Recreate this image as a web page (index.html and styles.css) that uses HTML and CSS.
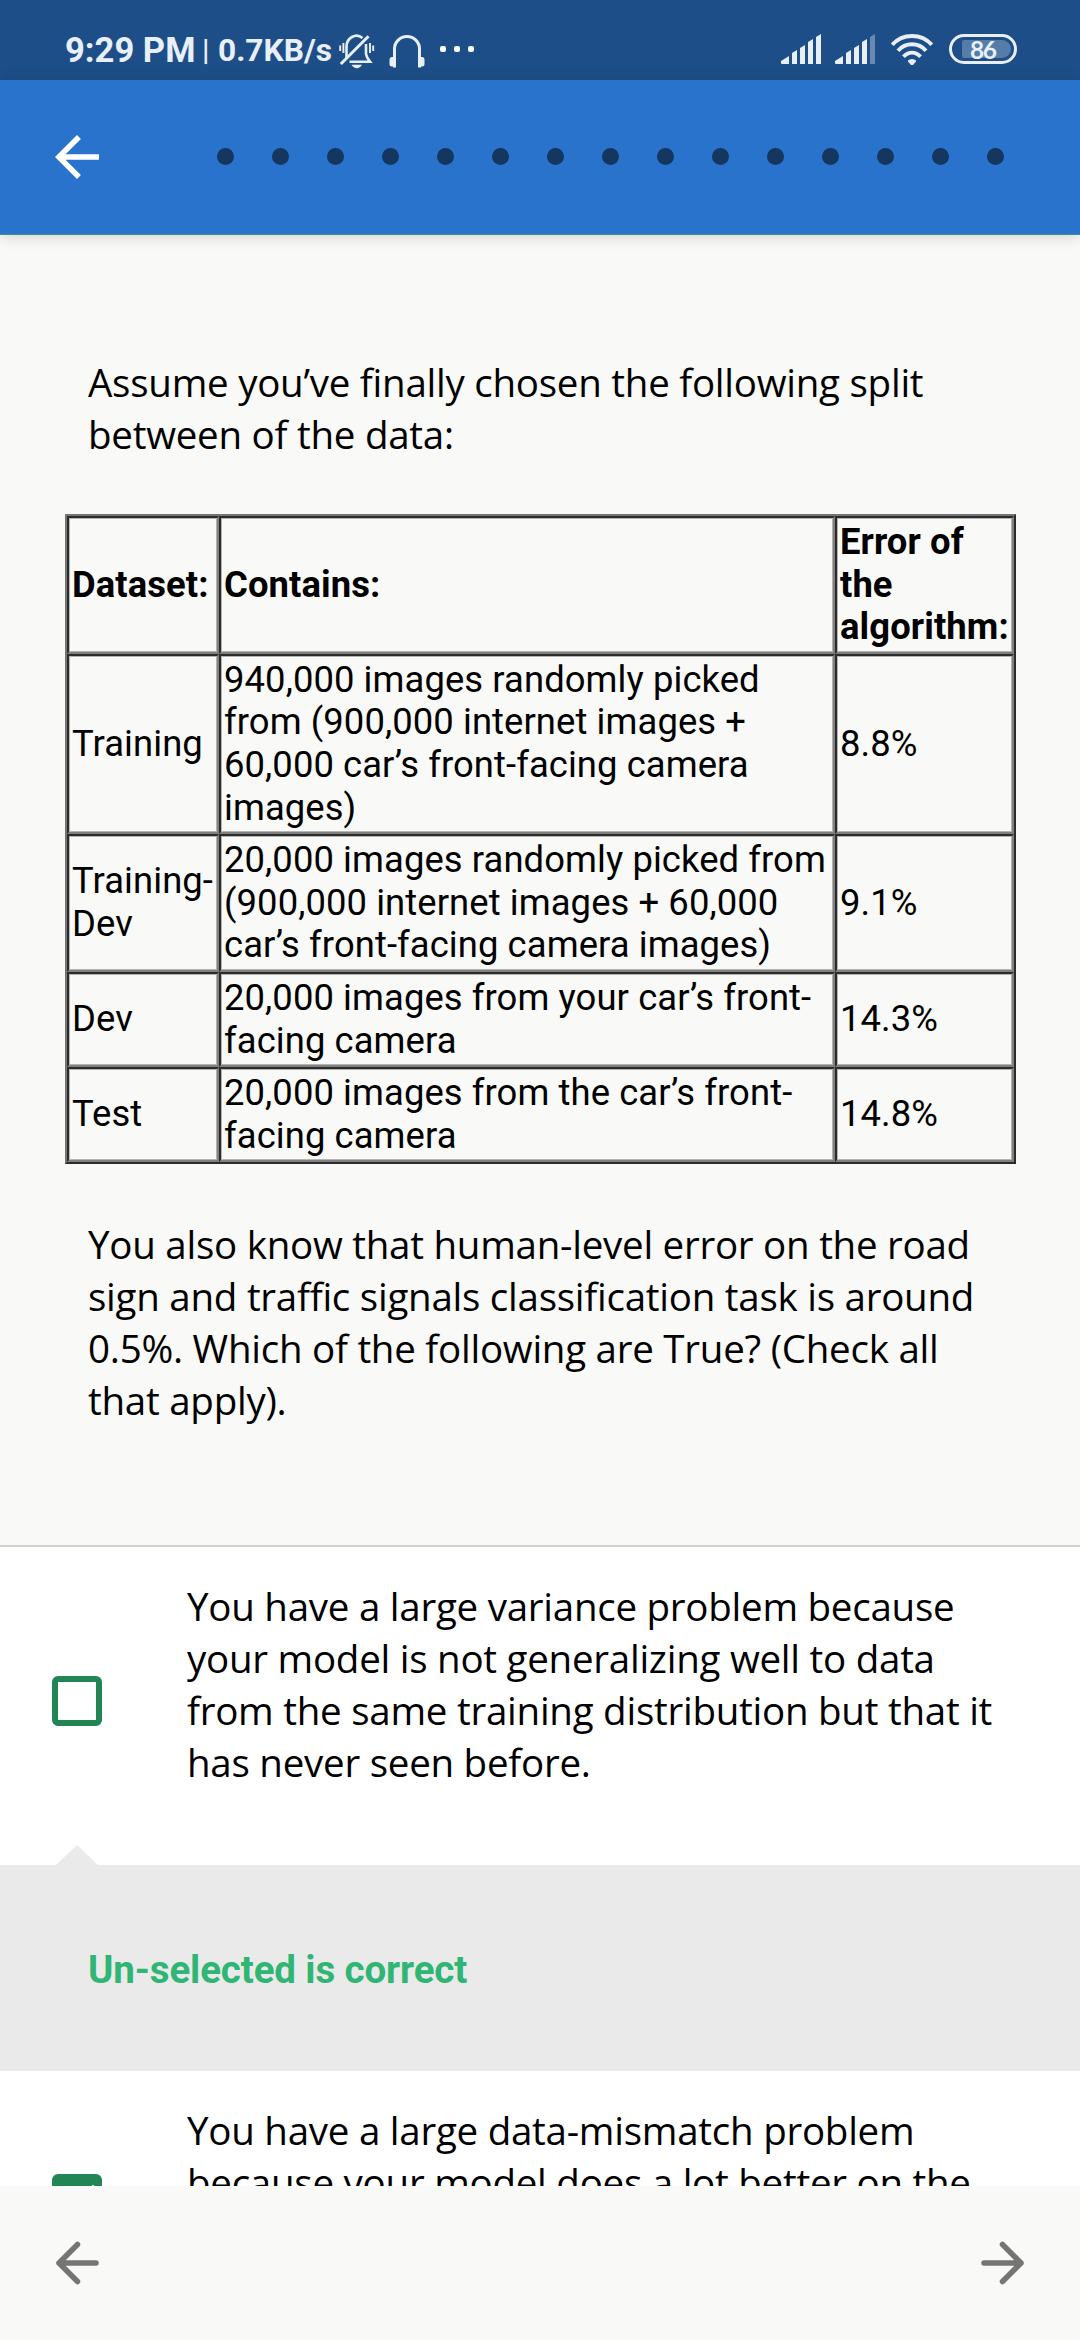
FILE: index.html
```html
<!DOCTYPE html>
<html lang="en">
<head>
<meta charset="utf-8">
<title>Quiz</title>
<link rel="stylesheet" href="styles.css">
</head>
<body>
<div class="screen">
  <header class="status">
    <span class="clock">9:29 PM</span><span class="sep">|</span><span class="speed">0.7KB/s</span>
    <svg class="ico-bell" width="36" height="36" viewBox="0 0 36 36" fill="none" stroke="#e8eff8" stroke-width="2.6">
      <path d="M7.500 24V13A10 11 0 0 1 23.500 4M27 10V20Q27.500 23.500 31 27.700H10.500"/>
      <path d="M1.800 30L29.500 2.300" stroke-width="3"/>
      <path d="M1.200 11.500v5.500M4.400 9v10M31 9v10M34.200 11.500v5.500" stroke-width="1.900"/>
      <path d="M12.500 30.800h10.500q-2 3.400-5.200 3.400t-5.300-3.400z" fill="#e8eff8" stroke="none"/>
    </svg>
    <svg class="ico-phones" width="36" height="36" viewBox="0 0 36 36" fill="none" stroke="#e8eff8" stroke-width="3">
      <path d="M5.500 33.500V15a12.500 12.500 0 0 1 25 0v18.500"/>
      <path d="M6 23v9.500H3Q.5 32.500 .5 30v-4Q.5 23 3 23zM30 23v9.500h3q2.500 0 2.500-2.500v-4q0-3-2.500-3z" fill="#e8eff8" stroke="none"/>
    </svg>
    <span class="more"><i></i><i></i><i></i></span>
    <span class="spacer"></span>
    <svg class="ico-signal" width="41" height="31" viewBox="0 0 41 31" fill="#e8eff8">
      <path d="M0 27l8-5v8H1q-1 0-1-1zM11 19l5-3v14h-5zM19 14l5-3v19h-5zM27 8l5-3v25h-5zM35 3l5-3v30h-5z"/>
    </svg>
    <svg class="ico-signal2" width="41" height="31" viewBox="0 0 41 31" fill="#e8eff8">
      <path d="M0 27l8-5v8H1q-1 0-1-1zM11 19l5-3v14h-5zM19 14l5-3v19h-5zM27 8l5-3v25h-5z"/>
      <path d="M35 3l5-3v30h-5z" fill="#6a89b1"/>
    </svg>
    <svg class="ico-wifi" width="42" height="32" viewBox="0 0 42 32" fill="none" stroke="#e8eff8" stroke-width="3.900">
      <path d="M1.300 10.800Q9 2 21 2t19.700 8.800M7 16.800Q12.500 10.300 21 10.300t14 6.500M12.500 22.800Q16 18.600 21 18.600t8.500 4.200"/>
      <path d="M21 25q2.500 0 4 1.500v1L22 31h-2l-3-3.500v-1Q18.500 25 21 25z" fill="#e8eff8" stroke="none"/>
    </svg>
    <span class="battery"><b>86</b></span>
  </header>
  <div class="appbar">
    <svg width="66" height="66" viewBox="0 0 24 24" fill="#fff"><path d="M20 11H7.830l5.590-5.590L12 4l-8 8 8 8 1.410-1.410L7.830 13H20v-2z"/></svg>
    <div class="dots"><i></i><i></i><i></i><i></i><i></i><i></i><i></i><i></i><i></i><i></i><i></i><i></i><i></i><i></i><i></i></div>
  </div>
  <main class="content">
    <p class="text intro">Assume you’ve finally chosen the following split<br>between of the data:</p>
    <table class="grid">
      <colgroup><col class="c1"><col class="c2"><col class="c3"></colgroup>
      <tr class="r3"><th>Dataset:</th><th>Contains:</th><th>Error of<br>the<br>algorithm:</th></tr>
      <tr class="r4"><td>Training</td><td>940,000 images randomly picked<br>from (900,000 internet images +<br>60,000 car’s front-facing camera<br>images)</td><td>8.8%</td></tr>
      <tr class="r3"><td>Training-<br>Dev</td><td>20,000 images randomly picked from<br>(900,000 internet images + 60,000<br>car’s front-facing camera images)</td><td>9.1%</td></tr>
      <tr class="r2"><td>Dev</td><td>20,000 images from your car’s front-<br>facing camera</td><td>14.3%</td></tr>
      <tr class="r2"><td>Test</td><td>20,000 images from the car’s front-<br>facing camera</td><td>14.8%</td></tr>
    </table>
    <p class="text outro">You also know that human-level error on the road<br>sign and traffic signals classification task is around<br>0.5%. Which of the following are True? (Check all<br>that apply).</p>
    <section class="option first">
      <span class="box"></span>
      <p class="text">You have a large variance problem because<br>your model is not generalizing well to data<br>from the same training distribution but that it<br>has never seen before.</p>
    </section>
    <section class="feedback">Un-selected is correct</section>
    <section class="option second">
      <span class="box checked"><svg width="50" height="50" viewBox="0 0 50 50" fill="none" stroke="#fff" stroke-width="5.500"><path d="M7 25l13 13 23-25.500"/></svg></span>
      <p class="text">You have a large data-mismatch problem<br>because your model does a lot better on the</p>
    </section>
  </main>
  <nav class="bottom">
    <svg width="66" height="66" viewBox="0 0 66 66"><path d="M52 33H15M33.500 14.500L15 33l18.500 18.500"/></svg>
    <svg width="66" height="66" viewBox="0 0 66 66"><path d="M14 33h37M32.500 14.500L51 33 32.500 51.500"/></svg>
  </nav>
</div>
</body>
</html>
```
FILE: styles.css
```css
* { box-sizing: border-box; }
body { margin: 0; background: #f9f9f7; }
p { margin: 0; }

.screen {
  width: 1080px;
  height: 2340px;
  display: flex;
  flex-direction: column;
  overflow: hidden;
  background: #f9f9f7;
}

/* status bar */
.status {
  flex: none;
  height: 80px;
  padding: 34px 63px 0 65px;
  background: #1d4e88;
  color: #e8eff8;
  display: flex;
  align-items: flex-start;
  font-family: Roboto, sans-serif;
  font-weight: 700;
  white-space: nowrap;
}
.status svg { flex: none; display: block; }
.clock { font-size: 34.6px; line-height: 33px; width: 130px; }
.sep { font-size: 30px; line-height: 32px; width: 23px; font-weight: 500; padding-left: 7px; }
.speed { font-size: 31.7px; line-height: 34px; width: 121px; }
.status .ico-bell { margin-top: 0; }
.status .ico-phones { margin-left: 14px; }
.more { display: flex; gap: 8px; margin: 12px 0 0 15px; }
.more i { width: 6px; height: 6px; border-radius: 2px; background: #fff; }
.spacer { flex: 1; }
.status .ico-signal2 { margin-left: 13px; }
.status .ico-wifi { margin-left: 15px; }
.battery {
  width: 68px;
  height: 30px;
  margin-left: 16px;
  border: 3px solid #e8eff8;
  border-radius: 15px;
  padding: 3px;
  padding-left: 10px;
  display: flex;
}
.battery b {
  width: 49px;
  height: 18px;
  background: #567ca8;
  border-radius: 2px 9px 9px 2px;
  font: 700 24.5px/19px Lato, sans-serif;
  letter-spacing: -1.5px;
  padding-left: 8px;
}

/* app bar */
.appbar {
  flex: none;
  height: 154px;
  padding: 0 76px 0 44px;
  background: #2a73cd;
  display: flex;
  align-items: center;
  justify-content: space-between;
  box-shadow: 0 1px 0 #3d8f8a, 0 2px 14px rgba(0, 0, 0, .18);
  position: relative;
}
.dots { display: flex; gap: 38px; margin-top: -1px; }
.dots i { width: 17px; height: 17px; border-radius: 50%; background: #14365f; }

/* question */
.content { flex: 1; min-height: 0; overflow: hidden; }
.text {
  font: 400 38.5px/52px "Open Sans", sans-serif;
  letter-spacing: -.25px;
  color: #000;
  white-space: nowrap;
}
.intro { padding: 122px 0 0 88px; }
.grid {
  width: 951px;
  margin: 54px 0 0 65px;
  border-style: solid;
  border-width: 2px;
  border-color: #757575 #2c2c2c #2c2c2c #757575;
  border-collapse: separate;
  border-spacing: 0;
  table-layout: fixed;
  font: 400 36.4px/42.66px Roboto, sans-serif;
  letter-spacing: .09px;
  color: #000;
}
.c1 { width: 152px; }
.c2 { width: 616px; }
.c3 { width: 179px; }
.r2 { height: 95px; }
.r3 { height: 138px; }
.r4 { height: 180px; }
.grid th, .grid td {
  padding: 0 0 0 3px;
  border-style: solid;
  border-width: 2px;
  border-color: #2c2c2c #808080 #808080 #2c2c2c;
  box-shadow: inset 0 0 0 1px #b4b4b3;
  text-align: left;
  vertical-align: middle;
  white-space: nowrap;
}
.grid th { font-weight: 700; }
.outro { padding: 54px 0 119px 88px; }

/* answers */
.option {
  display: flex;
  align-items: flex-start;
  background: #fff;
  padding-left: 52px;
}
.option .text { margin-left: 85px; }
.first { height: 320px; border-top: 2px solid #d0d0d0; padding-top: 33px; }
.first .box { margin-top: 96px; }
.second { height: 140px; padding-top: 33px; }
.second .box { margin-top: 70px; }
.box {
  flex: none;
  width: 50px;
  height: 50px;
  border: 6px solid #228654;
  border-radius: 6px;
}
.box.checked { border: 0; background: #228654; }
.feedback {
  position: relative;
  height: 206px;
  padding-left: 88px;
  background: #eaeaea;
  color: #2fb574;
  font: 700 38.5px/210px Roboto, sans-serif;
  letter-spacing: -.12px;
}
.feedback::before {
  content: "";
  position: absolute;
  left: 56px;
  top: -20px;
  width: 42px;
  height: 20px;
  background: #eaeaea;
  clip-path: polygon(50% 0, 100% 100%, 0 100%);
}

/* bottom navigation */
.bottom {
  flex: none;
  position: relative;
  height: 154px;
  padding: 0 44px;
  background: #f9f9f7;
  display: flex;
  align-items: center;
  justify-content: space-between;
}
.bottom path {
  fill: none;
  stroke: #757574;
  stroke-width: 5.5;
  stroke-linecap: round;
  stroke-linejoin: round;
}
```
